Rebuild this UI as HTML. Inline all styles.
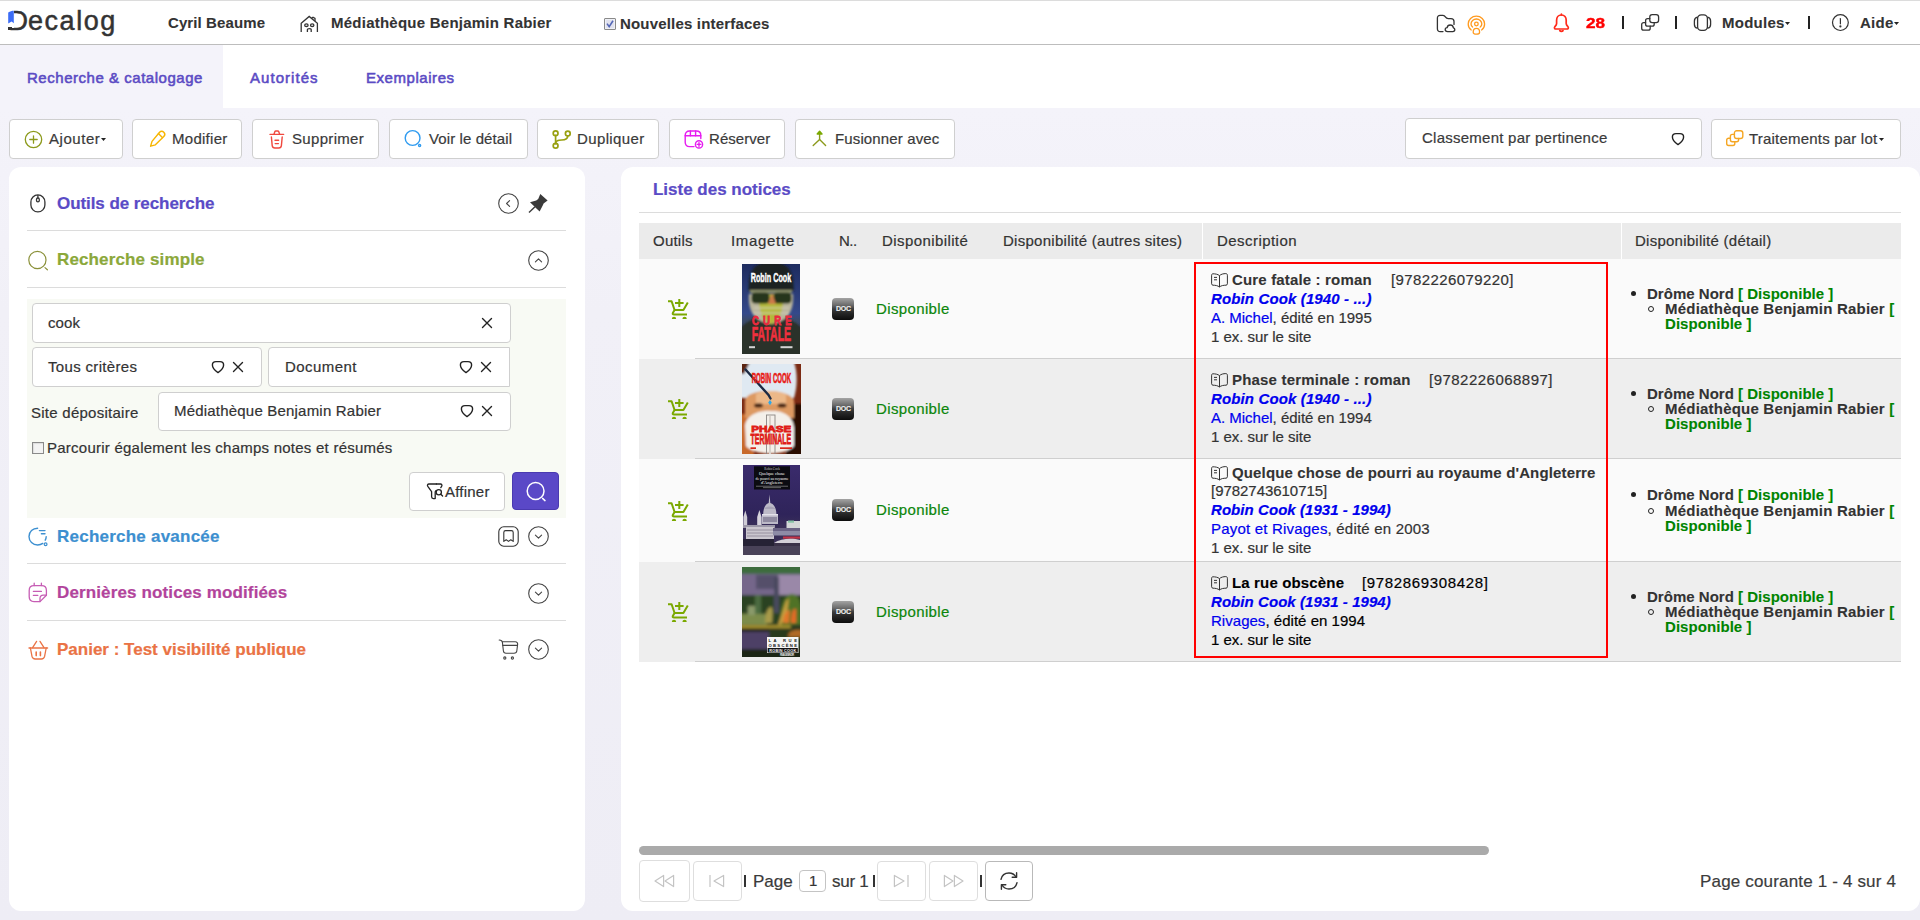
<!DOCTYPE html>
<html lang="fr">
<head>
<meta charset="utf-8">
<title>Decalog - Recherche &amp; catalogage</title>
<style>
*{box-sizing:border-box;margin:0;padding:0}
html,body{width:1920px;height:920px;overflow:hidden}
body{background:#f4f3fa;font-family:"Liberation Sans",sans-serif;font-size:15px;color:#333;position:relative}
.abs{position:absolute}
.t{position:absolute;white-space:nowrap;line-height:20px;-webkit-text-stroke:0.2px}
.b{font-weight:bold;-webkit-text-stroke:0.1px}
svg{display:block;overflow:visible}
/* top bar */
#top{position:absolute;left:0;top:0;width:1920px;height:45px;background:#fff;border-top:1px solid #dcdcdc;border-bottom:1px solid #bdbdbd}
#tabs{position:absolute;left:0;top:45px;width:1920px;height:63.5px;background:#fff}
#tabact{position:absolute;left:0;top:0;width:223px;height:64px;background:#f4f3fa}
.tab{color:#5b4bc4;font-size:15px;top:23px;-webkit-text-stroke:0.55px #5b4bc4}
/* toolbar */
.btn{position:absolute;top:119px;height:40px;background:#fff;border:1px solid #cfcfcf;border-radius:4px}
.btn .t{top:9px;font-size:15px;color:#3a3a3a}
.btn svg{position:absolute}
/* panels */
#left{position:absolute;left:9px;top:167px;width:576px;height:744px;background:#fff;border-radius:12px}
#right{position:absolute;left:621px;top:167px;width:1299px;height:744px;background:#fff;border-radius:12px}
.hr{position:absolute;height:1px;background:#dcdcdc}
.h{font-size:17px;font-weight:bold}
.inp{position:absolute;background:#fff;border:1px solid #cfcfcf;border-radius:4px}
/* table */
.th{position:absolute;top:223px;height:36px;background:#ebebeb}
.th .t{top:8px;color:#333}
.row{position:absolute;left:639px;width:1262px}
.rb{position:absolute;left:56px;right:0;bottom:0;height:1px;background:#cfcfcf}
.dispo{color:#0b860b}
.desc{position:absolute;left:571px;white-space:nowrap;line-height:19px;color:#222}
.desc a,.lnk{color:#0000ee}
.au{font-weight:bold;font-style:italic;color:#0000ee}
.det{position:absolute;left:1008px;font-weight:bold;line-height:15px;color:#222;white-space:nowrap}
.g{color:#008400}
/*FIT*/
#t_user{left:167.8px;letter-spacing:0.10px}
#t_site{left:330.5px;letter-spacing:0.24px}
#t_nouv{left:619.0px;letter-spacing:0.18px}
#t_mod{left:1721.0px;letter-spacing:0.25px}
#t_aide{left:1860.0px;letter-spacing:0.28px}
#tab1{left:26.0px;letter-spacing:0.53px}
#tab2{left:250.0px;letter-spacing:1.04px}
#tab3{left:365.3px;letter-spacing:0.55px}
#b1{left:39.2px;letter-spacing:0.54px}
#b2{left:38.5px;letter-spacing:0.27px}
#b3{left:39.0px;letter-spacing:0.32px}
#b4{left:39.2px;letter-spacing:0.10px}
#b5{left:38.5px;letter-spacing:0.38px}
#b6{left:38.2px;letter-spacing:0.06px}
#b7{left:38.0px;letter-spacing:0.13px}
#b8{left:16.0px;letter-spacing:0.25px}
#b9{left:37.0px;letter-spacing:0.20px}
#h1{left:58.0px;letter-spacing:-0.07px}
#h2{left:56.8px;letter-spacing:0.13px}
#h3{left:56.8px;letter-spacing:0.23px}
#h4{left:56.8px;letter-spacing:0.13px}
#h5{left:56.8px;letter-spacing:-0.00px}
#f1{left:47.8px;letter-spacing:0.10px}
#f2{left:47.8px;letter-spacing:0.33px}
#f3{left:283.7px;letter-spacing:0.44px}
#f4{left:31.5px;letter-spacing:0.26px}
#f5{left:173.0px;letter-spacing:0.20px}
#f6{left:46.5px;letter-spacing:0.24px}
#f7{left:445.3px;letter-spacing:0.22px}
#h6{left:651.7px;letter-spacing:-0.01px}
#c1{left:652.7px;letter-spacing:0.23px}
#c2{left:730.0px;letter-spacing:0.67px}
#c3{left:838.0px;letter-spacing:-0.50px}
#c4{left:881.3px;letter-spacing:0.41px}
#c5{left:1001.7px;letter-spacing:0.27px}
#c6{left:1215.6px;letter-spacing:0.45px}
#c7{left:1634.5px;letter-spacing:0.25px}
#d0{left:874.7px;letter-spacing:0.37px}
#d1{left:874.7px;letter-spacing:0.37px}
#d2{left:874.7px;letter-spacing:0.37px}
#d3{left:874.7px;letter-spacing:0.37px}
#r1a{left:1232.0px;letter-spacing:0.16px}
#r1i{left:1389.8px;letter-spacing:0.41px}
#r1b{left:1210.1px;letter-spacing:0.13px}
#r1c{left:1210.1px;letter-spacing:-0.01px}
#r1d{left:1209.1px;letter-spacing:-0.04px}
#r2a{left:1231.0px;letter-spacing:0.19px}
#r2i{left:1427.6px;letter-spacing:0.48px}
#r2b{left:1210.1px;letter-spacing:0.13px}
#r2c{left:1210.1px;letter-spacing:-0.01px}
#r2d{left:1209.1px;letter-spacing:-0.04px}
#r3a{left:1232.0px;letter-spacing:0.14px}
#r3i{left:1209.1px;letter-spacing:-0.04px}
#r3b{left:1210.1px;letter-spacing:0.06px}
#r3c{left:1209.1px;letter-spacing:0.20px}
#r3d{left:1209.1px;letter-spacing:-0.04px}
#r4a{left:1231.0px;letter-spacing:0.15px}
#r4i{left:1360.9px;letter-spacing:0.66px}
#r4b{left:1210.1px;letter-spacing:0.06px}
#r4c{left:1209.1px;letter-spacing:0.03px}
#r4d{left:1209.1px;letter-spacing:-0.04px}
#p1{left:751.7px;letter-spacing:0.02px}
#p2{left:832.0px;letter-spacing:-0.26px}
#p3{left:1699.6px;letter-spacing:0.17px}
#e0a{left:1646.0px;letter-spacing:0.02px}
#e0b{left:1663.8px;letter-spacing:0.21px}
#e0c{left:1663.8px;letter-spacing:0.06px}
#e1a{left:1646.0px;letter-spacing:0.02px}
#e1b{left:1663.8px;letter-spacing:0.21px}
#e1c{left:1663.8px;letter-spacing:0.06px}
#e2a{left:1646.0px;letter-spacing:0.02px}
#e2b{left:1663.8px;letter-spacing:0.21px}
#e2c{left:1663.8px;letter-spacing:0.06px}
#e3a{left:1646.0px;letter-spacing:0.02px}
#e3b{left:1663.8px;letter-spacing:0.21px}
#e3c{left:1663.8px;letter-spacing:0.06px}
/*ENDFIT*/
</style>
</head>
<body>
<div id="top">
<span class="t" id="logo" style="left:8.600px;top:4px;font-size:27px;line-height:32px;color:#333;letter-spacing:1.55px;-webkit-text-stroke:0.5px #333"><span style="margin-right:-1.700px">D</span>ecalog</span>
<span class="abs" style="left:7px;top:12.500px;width:7.200px;height:14px;background:#fff"></span>
<span class="abs" style="left:7px;top:9px;width:6.500px;height:4px;background:#fff"></span>
<span class="abs" style="left:8px;top:26.300px;width:4px;height:2.900px;background:#333"></span>
<svg class="abs" style="left:8px;top:9px" width="20" height="22" viewBox="0 0 20 22"><path d="M0.2 2.6 C2 1.200 4 0.800 5.800 0.800 L5.800 13.200 L3.600 11.400 L0.200 13.600 Z" fill="#3b6cf6"/></svg>
<span class="t b" id="t_user" style="left:168px;top:12px">Cyril Beaume</span>
<svg class="abs" style="left:300px;top:14px" width="19" height="19" viewBox="0 0 19 19" fill="none" stroke="#333" stroke-width="1.3"><path d="M1.2 17 V8.2 L9.2 1.4 L17.4 8.2 V17"/><path d="M11.5 3.2 L13 2.2 L15 3.4 V6"/><ellipse cx="6.4" cy="10.2" rx="1.7" ry="1.3"/><ellipse cx="12.2" cy="10.2" rx="1.7" ry="1.3"/><path d="M7.4 17 V14.6 C7.4 13.4 11.2 13.4 11.2 14.6 V17"/></svg>
<span class="t b" id="t_site" style="left:331px;top:12px">Médiathèque Benjamin Rabier</span>
<span class="abs" style="left:604px;top:17px;width:12px;height:12px;border:1px solid #8a8a8a;background:#e1e2ee;border-radius:1px;box-shadow:inset 0 0 0 1px #eef0f6"></span>
<svg class="abs" style="left:606px;top:19px" width="8" height="8" viewBox="0 0 8 8"><path d="M1 3.6 L3.2 6.6 L7 0.8" fill="none" stroke="#5467b6" stroke-width="1.6"/></svg>
<span class="t b" id="t_nouv" style="left:620px;top:13px">Nouvelles interfaces</span>
<!-- right icons -->
<svg class="abs" style="left:1436px;top:13px" width="20" height="20" viewBox="0 0 20 20" fill="none" stroke="#333" stroke-width="1.3" stroke-linecap="round" stroke-linejoin="round"><path d="M7 17.6 H4.2 C2.4 17.6 1.4 16.6 1.4 14.8 V4 C1.4 2.4 2.4 1.4 4 1.4 H7 C8.4 1.4 8.8 2 9.6 3.2 C10.2 4.2 10.8 4.6 12.2 4.6 H15 C17 4.6 18 5.8 18 7.6 V10.4"/><path d="M11.6 17.6 C10 17.6 9.2 16.6 9.2 15.6 C9.2 14.4 10 13.6 11.2 13.6 C11.4 12 12.6 11 14.2 11 C16 11 17.2 12.2 17.4 13.8 C18.4 14 18.8 14.8 18.8 15.6 C18.8 16.8 18 17.6 16.8 17.6 Z"/></svg>
<svg class="abs" style="left:1467px;top:14px" width="19" height="20" viewBox="0 0 19 20" fill="none" stroke="#ff9a1f" stroke-width="1.3" stroke-linecap="round"><path d="M4.200 15 C2.200 13.600 1.200 11.400 1.200 9 C1.200 4.600 4.800 1.200 9.400 1.200 C14 1.200 17.600 4.600 17.600 9 C17.600 11.400 16.600 13.600 14.600 15"/><path d="M5.6 12 C4.6 11.2 4 10.2 4 9 C4 6.2 6.4 4 9.4 4 C12.4 4 14.8 6.2 14.8 9 C14.8 10.2 14.2 11.2 13.2 12"/><circle cx="9.4" cy="9" r="1.8"/><path d="M9.400 13.400 C11.200 13.400 12.600 15 12.600 17.200 C12.600 18.600 11.400 19.200 9.400 19.200 C7.400 19.200 6.200 18.600 6.200 17.200 C6.200 15 7.600 13.400 9.400 13.400 Z"/></svg>
<svg class="abs" style="left:1553px;top:12px" width="17" height="20" viewBox="0 0 17 20" fill="none" stroke="#ff2a1a" stroke-width="1.7" stroke-linecap="round" stroke-linejoin="round"><path d="M8.4 2 C5.2 2 3.6 4.4 3.6 7.2 V10.4 C3.6 11.8 2.6 12.8 1.8 13.8 C1 14.8 1.6 16 3 16 H13.8 C15.2 16 15.8 14.8 15 13.8 C14.2 12.8 13.2 11.8 13.2 10.4 V7.2 C13.2 4.4 11.6 2 8.4 2 Z"/><path d="M8.4 1.2 V2"/><path d="M6.8 17.6 C7.6 18.6 9.2 18.6 10 17.6" stroke-width="1.8"/></svg>
<span class="t b" id="n28" style="left:1586px;top:12px;color:#ff0000;font-size:14px;transform:scaleX(1.22);transform-origin:0 0;-webkit-text-stroke:0.4px #ff0000">28</span>
<span class="abs" style="left:1622px;top:15px;width:2px;height:13px;background:#222"></span>
<svg class="abs" style="left:1641px;top:13px" width="19" height="18" viewBox="0 0 19 18" fill="none" stroke="#333" stroke-width="1.3" stroke-linejoin="round" stroke-linecap="round"><rect x="8.800" y="0.700" width="8.800" height="8" rx="2.400"/><path d="M8.800 4.600 H6.600 C5.400 4.600 4.600 5.400 4.600 6.600 V10.200 C4.600 11.400 5.400 12.200 6.600 12.200 H11.200 C12.400 12.200 13.200 11.400 13.200 10.200 V8.700"/><path d="M4.600 8.600 H2.700 C1.500 8.600 0.700 9.400 0.700 10.600 V14.200 C0.700 15.400 1.500 16.200 2.700 16.200 H7.200 C8.400 16.200 9.200 15.400 9.200 14.200 V12.200"/></svg>
<span class="abs" style="left:1675px;top:15px;width:2px;height:13px;background:#222"></span>
<svg class="abs" style="left:1693px;top:13px" width="19" height="19" viewBox="0 0 19 19" fill="none" stroke="#333" stroke-width="1.3"><rect x="4.600" y="0.800" width="9.800" height="15.600" rx="3.600"/><path d="M4.600 3.200 C2.600 3.600 1.400 5 1.400 7 V10.400 C1.400 12.400 2.600 13.800 4.600 14.200"/><path d="M14.400 3.200 C16.400 3.600 17.600 5 17.600 7 V10.400 C17.600 12.400 16.400 13.800 14.400 14.200"/></svg>
<span class="t b" id="t_mod" style="left:1722px;top:12px">Modules</span>
<svg class="abs" style="left:1785px;top:20.500px" width="5" height="3" viewBox="0 0 5 3"><path d="M0 0 H5 L2.5 3 Z" fill="#222"/></svg>
<span class="abs" style="left:1808px;top:15px;width:2px;height:13px;background:#222"></span>
<svg class="abs" style="left:1831px;top:13px" width="19" height="19" viewBox="0 0 19 19" fill="none" stroke="#333" stroke-width="1.2"><circle cx="9.400" cy="8.600" r="7.900"/><path d="M9.400 4.600 V9.800" stroke-linecap="round"/><circle cx="9.400" cy="12.400" r="0.500" fill="#333"/></svg>
<span class="t b" id="t_aide" style="left:1860px;top:12px">Aide</span>
<svg class="abs" style="left:1893.500px;top:20.500px" width="5" height="3" viewBox="0 0 5 3"><path d="M0 0 H5 L2.5 3 Z" fill="#222"/></svg>
</div>
<div id="tabs"><div id="tabact"></div>
<span class="t tab" id="tab1" style="left:27px">Recherche &amp; catalogage</span>
<span class="t tab" id="tab2" style="left:250px">Autorités</span>
<span class="t tab" id="tab3" style="left:366px">Exemplaires</span>
</div>
<div class="abs" style="left:0;top:108px;width:1920px;height:812px;background:linear-gradient(#f4f3fa,#f1f0f7 25%,#eeedf5)"></div>
<!-- toolbar -->
<div class="btn" style="left:9px;width:114px"><svg style="left:14px;top:9.5px" width="19" height="19" viewBox="0 0 19 19" fill="none" stroke="#8c9a1c" stroke-width="1.3" stroke-linecap="round"><circle cx="9.5" cy="9.5" r="8.2"/><path d="M9.5 5.8 V13.2 M5.8 9.5 H13.2"/></svg><span class="t" id="b1" style="left:39px">Ajouter</span><svg style="left:91px;top:18px" width="5" height="4" viewBox="0 0 5 4"><path d="M0 0 H5 L2.5 3 Z" fill="#222"/></svg></div>
<div class="btn" style="left:132px;width:110px"><svg style="left:16px;top:10px" width="17" height="18" viewBox="0 0 17 18" fill="none" stroke="#f7b500" stroke-width="1.4" stroke-linejoin="round" stroke-linecap="round"><path d="M10.6 2.2 C11.8 1 13.6 1 14.8 2.2 C16 3.4 16 5.2 14.8 6.4 L6.4 14.8 L1.6 16.2 L3 11.4 Z"/><path d="M9.4 3.6 L13.4 7.6"/></svg><span class="t" id="b2" style="left:39px">Modifier</span></div>
<div class="btn" style="left:252px;width:127px"><svg style="left:16px;top:10px" width="17" height="19" viewBox="0 0 17 19" fill="none" stroke="#f0483e" stroke-width="1.4" stroke-linecap="round" stroke-linejoin="round"><path d="M1 4.4 H14.6"/><path d="M5 4.2 L5.8 1.8 C6 1.2 6.4 1 7 1 H8.6 C9.2 1 9.6 1.2 9.8 1.8 L10.6 4.2"/><path d="M2.4 7 L3.2 15.6 C3.4 17.2 4.2 18 5.8 18 H9.8 C11.4 18 12.2 17.2 12.4 15.6 L13.2 7"/><path d="M6 10.2 H9.6 M6.2 13.6 H9.4"/></svg><span class="t" id="b3" style="left:39px">Supprimer</span></div>
<div class="btn" style="left:389px;width:139px"><svg style="left:14px;top:9px" width="20" height="20" viewBox="0 0 20 20" fill="none" stroke="#2f9bf0" stroke-width="1.4"><circle cx="8.6" cy="9" r="7.4"/><circle cx="15.6" cy="16.4" r="1.1" stroke-width="1.3"/></svg><span class="t" id="b4" style="left:39px">Voir le détail</span></div>
<div class="btn" style="left:537px;width:122px"><svg style="left:14px;top:9.5px" width="20" height="19" viewBox="0 0 20 19" fill="none" stroke="#98a010" stroke-width="1.7" stroke-linecap="round"><circle cx="3.6" cy="3.2" r="2.4"/><circle cx="3.6" cy="15.8" r="2.4"/><circle cx="15.8" cy="3.6" r="2.4"/><path d="M3.6 5.4 V13.6"/><path d="M15.8 5.8 C15.8 9.4 13.4 10 9.6 10 C6 10 3.6 10.8 3.6 13.4"/></svg><span class="t" id="b5" style="left:39px">Dupliquer</span></div>
<div class="btn" style="left:669px;width:116px"><svg style="left:14px;top:9px" width="20" height="20" viewBox="0 0 20 20" fill="none" stroke="#e61cf0" stroke-width="1.4" stroke-linecap="round"><path d="M10 17.6 H5.6 C2.8 17.6 1.2 16 1.2 13.2 V6.4 C1.2 3.6 2.8 2 5.6 2 H12.4 C15.2 2 16.8 3.6 16.8 6.4 V9.6"/><path d="M1.2 6.8 H16.8"/><path d="M6.4 2 V6.8 M11.6 2 V6.8"/><circle cx="15" cy="15.4" r="3.6"/><path d="M15 13.6 V17.2 M13.2 15.4 H16.8"/></svg><span class="t" id="b6" style="left:39px">Réserver</span></div>
<div class="btn" style="left:795px;width:160px"><svg style="left:16px;top:10px" width="16" height="18" viewBox="0 0 16 18" fill="none" stroke="#8c9a1c" stroke-width="1.4" stroke-linecap="round" stroke-linejoin="round"><path d="M7.6 2.2 V9.4"/><path d="M1.2 15.4 L7.6 9.4 L13.6 15.4"/><path d="M5.200 4 L7.600 1.200 L10 4 Z" fill="#7aa800" stroke="#7aa800"/></svg><span class="t" id="b7" style="left:39px">Fusionner avec</span></div>
<div class="btn" style="left:1405px;top:118px;width:297px;height:41px"><span class="t" id="b8" style="left:16px;top:9px">Classement par pertinence</span><svg style="left:265px;top:13px" width="14" height="14" viewBox="0 0 14 14" fill="none" stroke="#222" stroke-width="1.4" stroke-linejoin="round"><path d="M7 12.6 C4 10.6 1.4 8.4 1.4 5 C1.4 2.6 3 1.6 5 1.6 H9 C11 1.6 12.6 2.6 12.6 5 C12.6 8.4 10 10.6 7 12.6 Z"/></svg></div>
<div class="btn" style="left:1711px;width:190px"><svg style="left:14px;top:10px" width="19" height="18" viewBox="0 0 19 18" fill="none" stroke="#f5a623" stroke-width="1.400" stroke-linejoin="round" stroke-linecap="round"><rect x="8.400" y="0.700" width="8.400" height="7.800" rx="2.300"/><path d="M8.400 4.400 H6.300 C5.200 4.400 4.400 5.200 4.400 6.300 V9.800 C4.400 10.900 5.200 11.700 6.300 11.700 H10.700 C11.800 11.700 12.600 10.900 12.600 9.800 V8.500"/><path d="M4.400 8.200 H2.600 C1.500 8.200 0.700 9 0.700 10.100 V13.600 C0.700 14.700 1.500 15.500 2.600 15.500 H6.900 C8 15.500 8.800 14.700 8.800 13.600 V11.700"/></svg><span class="t" id="b9" style="left:37px">Traitements par lot</span><svg style="left:167px;top:18px" width="5" height="4" viewBox="0 0 5 4"><path d="M0 0 H5 L2.5 3 Z" fill="#222"/></svg></div>
<div id="left"></div>
<div id="right"></div>
<!-- right panel content -->
<span class="t h" id="h6" style="left:653px;top:180px;color:#5a4bc6">Liste des notices</span>
<div class="hr" style="left:639px;top:212px;width:1262px"></div>
<div class="th" style="left:639px;width:563px"></div><div class="th" style="left:1203px;width:418px"></div><div class="th" style="left:1622px;width:279px"></div>
<span class="t" id="c1" style="left:653px;top:231px;color:#333">Outils</span>
<span class="t" id="c2" style="left:731px;top:231px;color:#333">Imagette</span>
<span class="t" id="c3" style="left:839px;top:231px;color:#333">N..</span>
<span class="t" id="c4" style="left:882px;top:231px;color:#333">Disponibilité</span>
<span class="t" id="c5" style="left:1003px;top:231px;color:#333">Disponibilité (autres sites)</span>
<span class="t" id="c6" style="left:1217px;top:231px;color:#333">Description</span>
<span class="t" id="c7" style="left:1635px;top:231px;color:#333">Disponibilité (détail)</span>
<div class="row" style="top:259px;height:100px;background:#fafafa"><div class="rb"></div></div>
<div class="row" style="top:359px;height:100px;background:#eeeeee"><div class="rb"></div></div>
<div class="row" style="top:459px;height:103px;background:#fafafa"><div class="rb"></div></div>
<div class="row" style="top:562px;height:100px;background:#eeeeee"><div class="rb"></div></div>
<svg class="abs" style="left:667px;top:298px" width="22" height="22" viewBox="0 0 22 22" fill="none" stroke="#7aa800" stroke-width="2" stroke-linejoin="round"><path d="M1 3.200 H4.600 L7.600 12 H16.400 L20.800 4.600"/><path d="M7.600 12 L5.800 15 C5.400 16 6 16.600 7 16.600 H20"/><path d="M12.300 1 V9 M8 5 H16.600"/><path d="M4.800 21 A2.200 2.200 0 0 1 9.200 21 Z M15.400 21 A2.200 2.200 0 0 1 19.800 21 Z" fill="#7aa800" stroke="none"/></svg>
<div class="abs" style="left:832px;top:298px;width:22px;height:22px;border-radius:4px;background:linear-gradient(#a4a4a4,#6c6c6c 32%,#3c3c3c 50%,#262626 70%,#0c0c0c)"><span class="t b" style="left:4px;top:7px;font-size:7px;line-height:8px;color:#f0f0f0;letter-spacing:-0.3px">DOC</span></div>
<svg class="abs" style="left:667px;top:398px" width="22" height="22" viewBox="0 0 22 22" fill="none" stroke="#7aa800" stroke-width="2" stroke-linejoin="round"><path d="M1 3.200 H4.600 L7.600 12 H16.400 L20.800 4.600"/><path d="M7.600 12 L5.800 15 C5.400 16 6 16.600 7 16.600 H20"/><path d="M12.300 1 V9 M8 5 H16.600"/><path d="M4.800 21 A2.200 2.200 0 0 1 9.200 21 Z M15.400 21 A2.200 2.200 0 0 1 19.800 21 Z" fill="#7aa800" stroke="none"/></svg>
<div class="abs" style="left:832px;top:398px;width:22px;height:22px;border-radius:4px;background:linear-gradient(#a4a4a4,#6c6c6c 32%,#3c3c3c 50%,#262626 70%,#0c0c0c)"><span class="t b" style="left:4px;top:7px;font-size:7px;line-height:8px;color:#f0f0f0;letter-spacing:-0.3px">DOC</span></div>
<svg class="abs" style="left:667px;top:500px" width="22" height="22" viewBox="0 0 22 22" fill="none" stroke="#7aa800" stroke-width="2" stroke-linejoin="round"><path d="M1 3.200 H4.600 L7.600 12 H16.400 L20.800 4.600"/><path d="M7.600 12 L5.800 15 C5.400 16 6 16.600 7 16.600 H20"/><path d="M12.300 1 V9 M8 5 H16.600"/><path d="M4.800 21 A2.200 2.200 0 0 1 9.200 21 Z M15.400 21 A2.200 2.200 0 0 1 19.800 21 Z" fill="#7aa800" stroke="none"/></svg>
<div class="abs" style="left:832px;top:499px;width:22px;height:22px;border-radius:4px;background:linear-gradient(#a4a4a4,#6c6c6c 32%,#3c3c3c 50%,#262626 70%,#0c0c0c)"><span class="t b" style="left:4px;top:7px;font-size:7px;line-height:8px;color:#f0f0f0;letter-spacing:-0.3px">DOC</span></div>
<svg class="abs" style="left:667px;top:601px" width="22" height="22" viewBox="0 0 22 22" fill="none" stroke="#7aa800" stroke-width="2" stroke-linejoin="round"><path d="M1 3.200 H4.600 L7.600 12 H16.400 L20.800 4.600"/><path d="M7.600 12 L5.800 15 C5.400 16 6 16.600 7 16.600 H20"/><path d="M12.300 1 V9 M8 5 H16.600"/><path d="M4.800 21 A2.200 2.200 0 0 1 9.200 21 Z M15.400 21 A2.200 2.200 0 0 1 19.800 21 Z" fill="#7aa800" stroke="none"/></svg>
<div class="abs" style="left:832px;top:601px;width:22px;height:22px;border-radius:4px;background:linear-gradient(#a4a4a4,#6c6c6c 32%,#3c3c3c 50%,#262626 70%,#0c0c0c)"><span class="t b" style="left:4px;top:7px;font-size:7px;line-height:8px;color:#f0f0f0;letter-spacing:-0.3px">DOC</span></div>
<span class="t dispo" id="d0" style="left:876px;top:299px">Disponible</span>
<span class="t dispo" id="d1" style="left:876px;top:399px">Disponible</span>
<span class="t dispo" id="d2" style="left:876px;top:500px">Disponible</span>
<span class="t dispo" id="d3" style="left:876px;top:602px">Disponible</span>
<svg class="abs" style="left:742px;top:264px;overflow:hidden" width="58" height="90" viewBox="0 0 58 90"><defs><filter id="bl1" x="-10%" y="-10%" width="120%" height="120%"><feGaussianBlur stdDeviation="0.9"/></filter><linearGradient id="gc1" x1="0" y1="0" x2="0" y2="1"><stop offset="0" stop-color="#1d2b5e"/><stop offset="0.55" stop-color="#34498a"/><stop offset="0.62" stop-color="#3a4a6a"/></linearGradient></defs><rect width="58" height="90" fill="url(#gc1)"/><g filter="url(#bl1)"><path d="M-2 92 V64 C6 56 14 54 20 52 H38 C44 54 52 56 60 64 V92 Z" fill="#2b302c"/><path d="M7 30 C6 44 10 58 29 60 C48 58 52 44 51 30 Z" fill="#b9b59c"/><path d="M17 30 C16 44 20 58 29 60 C38 58 42 44 41 30 Z" fill="#b4b83a"/><path d="M6.600 27 C6 4 14 -2 29 -2 C44 -2 52 4 51.600 27 Z" fill="#1a2124"/><rect x="8" y="26" width="42" height="3" fill="#8a8f6a"/><rect x="9.500" y="28.500" width="18" height="11" rx="4" fill="#26361a"/><rect x="31.500" y="28.500" width="18" height="11" rx="4" fill="#26361a"/><path d="M26 40 L30 29 L34 40 Z" fill="#cc7a48"/><path d="M12 44 H47 M11 49 H47" stroke="#d8d6c4" stroke-width="1.200" fill="none"/></g><text x="29" y="17.600" font-family="Liberation Sans, sans-serif" font-weight="bold" font-size="13.500" fill="#ffffff" stroke="#ffffff" stroke-width="0.5" text-anchor="middle" textLength="40.500" lengthAdjust="spacingAndGlyphs">Robin Cook</text><text transform="translate(10,61) scale(0.8,1)" font-family="Liberation Sans, sans-serif" font-weight="bold" font-size="12" fill="#ea2a3e" stroke="#ea2a3e" stroke-width="0.8" letter-spacing="5.2">CURE</text><text x="29.400" y="77.400" font-family="Liberation Sans, sans-serif" font-weight="bold" font-size="20" fill="#f0303e" stroke="#f0303e" stroke-width="0.7" text-anchor="middle" textLength="39.500" lengthAdjust="spacingAndGlyphs">FATALE</text><rect x="7" y="82.200" width="6" height="2" fill="#d4d4d4"/><rect x="38.500" y="82.200" width="12" height="2" fill="#d4d4d4"/></svg>
<svg class="abs" style="left:742px;top:364px;overflow:hidden" width="59" height="90" viewBox="0 0 59 90"><defs><filter id="bl2" x="-10%" y="-10%" width="120%" height="120%"><feGaussianBlur stdDeviation="1.300"/></filter></defs><rect width="59" height="90" fill="#7a2a12"/><g filter="url(#bl2)"><rect x="44" y="40" width="18" height="54" fill="#2a0c06"/><rect x="-2" y="50" width="14" height="44" fill="#c8692a"/><path d="M-2 -2 H52 C56 10 55 24 52 34 H-2 Z" fill="#dfe9f2"/><path d="M-2 -2 H8 L2 10 H-2 Z" fill="#5a2410"/><path d="M3 36 C6 24 46 24 52 36 V54 H3 Z" fill="#dd9a62"/><path d="M14 30 C22 26 34 26 44 30 V40 H14 Z" fill="#ecb888"/><ellipse cx="16.500" cy="41.500" rx="4.500" ry="2.200" fill="#4a2812"/><ellipse cx="40" cy="41.500" rx="4.500" ry="2.200" fill="#4a2812"/><path d="M3 62 C4 50 20 46 29 47 C40 46 52 52 52 64 V82 C44 92 12 92 4 82 Z" fill="#f4f0ea"/></g><path d="M3.500 5.500 L26.500 31 L28.500 34.500" stroke="#1c2a44" stroke-width="2.400" fill="none" stroke-linecap="round"/><path d="M28 36 L29.800 38.600 L28 41.200 L26.200 38.600 Z" fill="#2aa8ea"/><rect x="24.500" y="51" width="8.500" height="40" fill="none" stroke="#8c8684" stroke-width="0.900"/><rect x="27" y="52" width="2" height="38" fill="#d8d2cc"/><text x="29.400" y="18.500" font-family="Liberation Sans, sans-serif" font-weight="bold" font-size="14" fill="#e82018" stroke="#e82018" stroke-width="0.7" text-anchor="middle" textLength="39.500" lengthAdjust="spacingAndGlyphs">ROBIN COOK</text><text x="29.200" y="68.400" font-family="Liberation Sans, sans-serif" font-weight="bold" font-size="9" fill="#e01c18" stroke="#e01c18" stroke-width="0.8" text-anchor="middle" textLength="40" lengthAdjust="spacingAndGlyphs">PHASE</text><text x="28.800" y="79.500" font-family="Liberation Sans, sans-serif" font-weight="bold" font-size="14" fill="#e01c18" stroke="#e01c18" stroke-width="0.8" text-anchor="middle" textLength="40.500" lengthAdjust="spacingAndGlyphs">TERMINALE</text><rect x="8.500" y="83.300" width="5.500" height="1.700" fill="#d8281c"/><rect x="38" y="83.300" width="12" height="1.700" fill="#d8281c"/></svg>
<svg class="abs" style="left:743px;top:465px;overflow:hidden" width="57" height="90" viewBox="0 0 57 90"><defs><filter id="bl3" x="-10%" y="-10%" width="120%" height="120%"><feGaussianBlur stdDeviation="0.500"/></filter><linearGradient id="gc3" x1="0" y1="0" x2="0" y2="1"><stop offset="0" stop-color="#3a2b6c"/><stop offset="0.55" stop-color="#2f245a"/><stop offset="0.7" stop-color="#3a3058"/></linearGradient></defs><rect width="57" height="90" fill="url(#gc3)"/><g filter="url(#bl3)"><path d="M26.500 29.500 L27.300 38 C31 39 33.200 43 33.400 49 H35 V59 H19 V49 H20.200 C20.400 43 22.500 39 25.700 38 Z" fill="#bdbac8"/><path d="M21 44 C22 40.500 31 40.500 32.600 44 Z" fill="#a8a4b6"/><rect x="19" y="49" width="16" height="1.400" fill="#e4e2ea"/><rect x="20" y="52" width="14" height="5" fill="#8f8aa0"/><path d="M2.300 45.500 L4.200 52 V63 H0.400 V52 Z" fill="#cfccd6"/><path d="M16.400 45 L18.600 52 V63 H14.200 V52 Z" fill="#d6d3dc"/><rect x="0" y="60" width="32" height="3" fill="#9c98a8"/><rect x="3" y="62" width="28" height="12" fill="#cac6ce"/><path d="M4 65 H30 M4 68 H30 M4 71 H30" stroke="#8a8494" stroke-width="0.800"/><rect x="43.500" y="56" width="14" height="7" fill="#d4d8d8"/><rect x="45" y="55.500" width="6" height="2.200" fill="#86c4a6"/><rect x="30" y="63" width="27" height="3" fill="#6a6484"/><rect x="30" y="66" width="27" height="4.500" fill="#8e8ca6"/><rect x="40" y="71.500" width="17" height="2.200" fill="#c23446"/><path d="M31 78 C38 73 50 73 57 75 V78 Z" fill="#d4d0d8"/><rect x="0" y="74" width="31" height="7" fill="#282236"/><rect x="31" y="78" width="26" height="3" fill="#3a3248"/><rect x="0" y="81" width="57" height="9" fill="#4a4259"/></g><rect x="11" y="1.300" width="36" height="23.200" fill="#0b0b11"/><text x="29" y="5.200" font-family="Liberation Serif, serif" font-size="3.200" fill="#c8c8c8" text-anchor="middle">Robin Cook</text><text x="29" y="10.200" font-family="Liberation Serif, serif" font-size="4.400" fill="#ffffff" text-anchor="middle">Quelque chose</text><text x="29" y="14.600" font-family="Liberation Serif, serif" font-size="4.400" fill="#ffffff" text-anchor="middle" textLength="33" lengthAdjust="spacingAndGlyphs">de pourri au royaume</text><text x="29" y="19" font-family="Liberation Serif, serif" font-size="4.400" fill="#ffffff" text-anchor="middle">d'Angleterre</text><rect x="13" y="20.800" width="32" height="0.700" fill="#8c8c8c"/><rect x="20" y="22.400" width="18" height="0.700" fill="#8c8c8c"/></svg>
<svg class="abs" style="left:742px;top:567px;overflow:hidden" width="58" height="90" viewBox="0 0 58 90"><defs><filter id="bl4" x="-10%" y="-10%" width="120%" height="120%"><feGaussianBlur stdDeviation="1.600"/></filter></defs><rect width="58" height="90" fill="#2c3a20"/><g filter="url(#bl4)"><rect x="-3" y="-3" width="64" height="10" fill="#3c6c3e"/><rect x="-3" y="7" width="64" height="26" fill="#75668a"/><rect x="36" y="8" width="26" height="20" fill="#9a88a8"/><rect x="14" y="8" width="22" height="14" fill="#55506a"/><rect x="-3" y="28" width="64" height="30" fill="#2b4221"/><rect x="13" y="28" width="6" height="24" fill="#4c6c40"/><rect x="32" y="10" width="5" height="36" fill="#4a4a5e"/><path d="M38 58 C38 40 42 27 50 27 C57 27 60 36 60 58 Z" fill="#4f7226"/><path d="M44 34 L47 31 L45 46 L39 58 H36 Z" fill="#c8a040"/><path d="M41 56 C41 48 44 43 48 43 L47 56 Z" fill="#e2782a"/><path d="M49 56 C49 46 51 41 54 42 L54 56 Z" fill="#e86a28"/><rect x="-3" y="47" width="28" height="11" fill="#7c8c4c"/><rect x="6" y="39" width="7" height="9" fill="#8a9a6a"/><path d="M23 56 C23 46 26 40 29 40 C31 40 31 46 30 56 Z" fill="#a89a4a"/><rect x="-3" y="58.600" width="52" height="2.200" fill="#c8a830"/><rect x="-3" y="61.500" width="64" height="5" fill="#26281a"/><rect x="-3" y="65" width="30" height="17" fill="#4e3f66"/><rect x="27" y="62" width="34" height="10" fill="#2a3a1c"/><path d="M46 70 C46 64 52 62 60 63 V70 Z" fill="#b06a28"/><rect x="-3" y="82" width="64" height="11" fill="#1e2616"/></g><rect x="25" y="70" width="31.500" height="16" fill="#f5f5f3"/><text x="40.700" y="74.600" font-family="Liberation Sans, sans-serif" font-weight="bold" font-size="4.200" fill="#161616" text-anchor="middle" textLength="28.500" lengthAdjust="spacing">LA RUE</text><text x="40.700" y="79.800" font-family="Liberation Sans, sans-serif" font-weight="bold" font-size="4.200" fill="#161616" text-anchor="middle" textLength="28.500" lengthAdjust="spacing">OBSCÈNE</text><rect x="25.600" y="81" width="30.200" height="4.500" fill="#121212"/><text x="40.700" y="84.600" font-family="Liberation Sans, sans-serif" font-weight="bold" font-size="3.800" fill="#f4f4f4" text-anchor="middle" textLength="27" lengthAdjust="spacing">ROBIN COOK</text><text x="45" y="88.600" font-family="Liberation Sans, sans-serif" font-weight="bold" font-size="2.600" fill="#e8e8e8" text-anchor="middle" textLength="14" lengthAdjust="spacing">RIVAGES/NOIR</text></svg>
<svg class="abs" style="left:1211px;top:273px" width="17" height="15" viewBox="0 0 17 15" fill="none" stroke="#333" stroke-width="1" stroke-linejoin="round"><path d="M8.5 2.6 C6.8 1.2 4.2 0.8 2 0.8 C1.2 0.8 0.6 1.2 0.6 2.2 V10.8 C0.6 11.6 1.2 12.2 2 12.2 C4.2 12.2 6.8 12.6 8.5 14 Z"/><path d="M8.5 2.6 C10 1.2 12.4 0.6 14.8 0.6 C15.8 0.6 16.4 1.2 16.4 2.2 V10.8 C16.4 11.6 15.8 12.2 15 12.2 C12.6 12.2 10 12.6 8.5 14"/><path d="M3 4.4 H6 M3 6.8 H6"/></svg>
<span class="t b" id="r1a" style="left:1232px;top:270px">Cure fatale : roman</span>
<span class="t " id="r1i" style="left:1391px;top:270px">[9782226079220]</span>
<span class="t au" id="r1b" style="left:1211px;top:289px">Robin Cook (1940 - ...)</span>
<span class="t " id="r1c" style="left:1211px;top:308px"><span class="lnk">A. Michel</span>, édité en 1995</span>
<span class="t " id="r1d" style="left:1211px;top:327px">1 ex. sur le site</span>
<svg class="abs" style="left:1211px;top:373px" width="17" height="15" viewBox="0 0 17 15" fill="none" stroke="#333" stroke-width="1" stroke-linejoin="round"><path d="M8.5 2.6 C6.8 1.2 4.2 0.8 2 0.8 C1.2 0.8 0.6 1.2 0.6 2.2 V10.8 C0.6 11.6 1.2 12.2 2 12.2 C4.2 12.2 6.8 12.6 8.5 14 Z"/><path d="M8.5 2.6 C10 1.2 12.4 0.6 14.8 0.6 C15.8 0.6 16.4 1.2 16.4 2.2 V10.8 C16.4 11.6 15.8 12.2 15 12.2 C12.6 12.2 10 12.6 8.5 14"/><path d="M3 4.4 H6 M3 6.8 H6"/></svg>
<span class="t b" id="r2a" style="left:1232px;top:370px">Phase terminale : roman</span>
<span class="t " id="r2i" style="left:1429px;top:370px">[9782226068897]</span>
<span class="t au" id="r2b" style="left:1211px;top:389px">Robin Cook (1940 - ...)</span>
<span class="t " id="r2c" style="left:1211px;top:408px"><span class="lnk">A. Michel</span>, édité en 1994</span>
<span class="t " id="r2d" style="left:1211px;top:427px">1 ex. sur le site</span>
<svg class="abs" style="left:1211px;top:466px" width="17" height="15" viewBox="0 0 17 15" fill="none" stroke="#333" stroke-width="1" stroke-linejoin="round"><path d="M8.5 2.6 C6.8 1.2 4.2 0.8 2 0.8 C1.2 0.8 0.6 1.2 0.6 2.2 V10.8 C0.6 11.6 1.2 12.2 2 12.2 C4.2 12.2 6.8 12.6 8.5 14 Z"/><path d="M8.5 2.6 C10 1.2 12.4 0.6 14.8 0.6 C15.8 0.6 16.4 1.2 16.4 2.2 V10.8 C16.4 11.6 15.8 12.2 15 12.2 C12.6 12.2 10 12.6 8.5 14"/><path d="M3 4.4 H6 M3 6.8 H6"/></svg>
<span class="t b" id="r3a" style="left:1232px;top:463px">Quelque chose de pourri au royaume d'Angleterre</span>
<span class="t " id="r3i" style="left:1211px;top:481px">[9782743610715]</span>
<span class="t au" id="r3b" style="left:1211px;top:500px">Robin Cook (1931 - 1994)</span>
<span class="t " id="r3c" style="left:1211px;top:519px"><span class="lnk">Payot et Rivages</span>, édité en 2003</span>
<span class="t " id="r3d" style="left:1211px;top:538px">1 ex. sur le site</span>
<svg class="abs" style="left:1211px;top:576px" width="17" height="15" viewBox="0 0 17 15" fill="none" stroke="#333" stroke-width="1" stroke-linejoin="round"><path d="M8.5 2.6 C6.8 1.2 4.2 0.8 2 0.8 C1.2 0.8 0.6 1.2 0.6 2.2 V10.8 C0.6 11.6 1.2 12.2 2 12.2 C4.2 12.2 6.8 12.6 8.5 14 Z"/><path d="M8.5 2.6 C10 1.2 12.4 0.6 14.8 0.6 C15.8 0.6 16.4 1.2 16.4 2.2 V10.8 C16.4 11.6 15.8 12.2 15 12.2 C12.6 12.2 10 12.6 8.5 14"/><path d="M3 4.4 H6 M3 6.8 H6"/></svg>
<span class="t b" id="r4a" style="color:#000;left:1232px;top:573px">La rue obscène</span>
<span class="t " id="r4i" style="color:#000;left:1362px;top:573px">[9782869308428]</span>
<span class="t au" id="r4b" style="left:1211px;top:592px">Robin Cook (1931 - 1994)</span>
<span class="t " id="r4c" style="color:#000;left:1211px;top:611px"><span class="lnk">Rivages</span>, édité en 1994</span>
<span class="t " id="r4d" style="color:#000;left:1211px;top:630px">1 ex. sur le site</span>
<span class="abs" style="left:1631px;top:291px;width:5px;height:5px;border-radius:50%;background:#222"></span>
<span class="t b" id="e0a" style="left:1647px;top:284px">Drôme Nord <span class="g">[ Disponible ]</span></span>
<span class="abs" style="left:1648px;top:306px;width:6px;height:6px;border-radius:50%;border:1px solid #222"></span>
<span class="t b" id="e0b" style="left:1665px;top:299px">Médiathèque Benjamin Rabier <span class="g">[</span></span>
<span class="t b g" id="e0c" style="left:1665px;top:314px">Disponible ]</span>
<span class="abs" style="left:1631px;top:391px;width:5px;height:5px;border-radius:50%;background:#222"></span>
<span class="t b" id="e1a" style="left:1647px;top:384px">Drôme Nord <span class="g">[ Disponible ]</span></span>
<span class="abs" style="left:1648px;top:406px;width:6px;height:6px;border-radius:50%;border:1px solid #222"></span>
<span class="t b" id="e1b" style="left:1665px;top:399px">Médiathèque Benjamin Rabier <span class="g">[</span></span>
<span class="t b g" id="e1c" style="left:1665px;top:414px">Disponible ]</span>
<span class="abs" style="left:1631px;top:492px;width:5px;height:5px;border-radius:50%;background:#222"></span>
<span class="t b" id="e2a" style="left:1647px;top:485px">Drôme Nord <span class="g">[ Disponible ]</span></span>
<span class="abs" style="left:1648px;top:508px;width:6px;height:6px;border-radius:50%;border:1px solid #222"></span>
<span class="t b" id="e2b" style="left:1665px;top:501px">Médiathèque Benjamin Rabier <span class="g">[</span></span>
<span class="t b g" id="e2c" style="left:1665px;top:516px">Disponible ]</span>
<span class="abs" style="left:1631px;top:594px;width:5px;height:5px;border-radius:50%;background:#222"></span>
<span class="t b" id="e3a" style="left:1647px;top:587px">Drôme Nord <span class="g">[ Disponible ]</span></span>
<span class="abs" style="left:1648px;top:609px;width:6px;height:6px;border-radius:50%;border:1px solid #222"></span>
<span class="t b" id="e3b" style="left:1665px;top:602px">Médiathèque Benjamin Rabier <span class="g">[</span></span>
<span class="t b g" id="e3c" style="left:1665px;top:617px">Disponible ]</span>
<div class="abs" style="left:1194px;top:262px;width:414px;height:396px;border:2px solid #ff0000"></div>
<div class="abs" style="left:639px;top:846px;width:850px;height:9px;border-radius:5px;background:#aaaaaa"></div>
<div class="abs" style="left:639px;top:860px;width:51px;height:42px;border:1px solid #dedede;border-radius:4px;background:#fff"></div><svg class="abs" style="left:654px;top:874px" width="21" height="14" viewBox="0 0 21 14" fill="none" stroke="#c4c4c4" stroke-width="1.2" stroke-linejoin="round"><path d="M9.6 1.4 V12.6 L1 7 Z"/><path d="M19.6 1.4 V12.6 L11 7 Z"/></svg>
<div class="abs" style="left:693px;top:861px;width:49px;height:40px;border:1px solid #dedede;border-radius:4px;background:#fff"></div><svg class="abs" style="left:709px;top:874px" width="16" height="14" viewBox="0 0 16 14" fill="none" stroke="#c4c4c4" stroke-width="1.2" stroke-linejoin="round"><path d="M1 1 V13"/><path d="M14.6 1.4 V12.6 L5 7 Z"/></svg>
<span class="abs" style="left:744px;top:875px;width:1.5px;height:12px;background:#333"></span>
<span class="t" id="p1" style="left:753px;top:872px;font-size:17px;color:#3a3a3a">Page</span>
<div class="abs" style="left:799px;top:870px;width:27px;height:22px;border:1px solid #c4c4c4;border-radius:4px;background:#fff"></div>
<span class="t" style="left:809px;top:871px;font-size:15px">1</span>
<span class="t" id="p2" style="left:832px;top:872px;font-size:17px;color:#3a3a3a">sur 1</span>
<span class="abs" style="left:873px;top:875px;width:1.5px;height:12px;background:#333"></span>
<div class="abs" style="left:877px;top:861px;width:49px;height:40px;border:1px solid #dedede;border-radius:4px;background:#fff"></div><svg class="abs" style="left:893px;top:874px" width="16" height="14" viewBox="0 0 16 14" fill="none" stroke="#c4c4c4" stroke-width="1.2" stroke-linejoin="round"><path d="M15 1 V13"/><path d="M1.4 1.4 V12.6 L11 7 Z"/></svg>
<div class="abs" style="left:929px;top:861px;width:49px;height:40px;border:1px solid #dedede;border-radius:4px;background:#fff"></div><svg class="abs" style="left:943px;top:874px" width="21" height="14" viewBox="0 0 21 14" fill="none" stroke="#c4c4c4" stroke-width="1.2" stroke-linejoin="round"><path d="M1.4 1.4 V12.6 L10 7 Z"/><path d="M11.4 1.4 V12.6 L20 7 Z"/></svg>
<span class="abs" style="left:980px;top:875px;width:1.5px;height:12px;background:#333"></span>
<div class="abs" style="left:985px;top:861px;width:48px;height:40px;border:1px solid #b9b9b9;border-radius:4px;background:#fff"></div><svg class="abs" style="left:999px;top:871px" width="20" height="20" viewBox="0 0 20 20" fill="none" stroke="#333" stroke-width="1.4" stroke-linecap="round" stroke-linejoin="round"><path d="M2 8.4 C2.8 4.6 6 2 10 2 C13 2 15.6 3.6 17 6"/><path d="M17.6 1.8 V6.2 H13.2"/><path d="M18 11.6 C17.2 15.4 14 18 10 18 C7 18 4.4 16.4 3 14"/><path d="M2.4 18.2 V13.8 H6.8"/></svg>
<span class="t" id="p3" style="left:1700px;top:872px;font-size:17px;color:#3c3c3c">Page courante 1 - 4 sur 4</span>
<!-- left panel content -->
<svg class="abs" style="left:30px;top:194px" width="17" height="20" viewBox="0 0 17 20" fill="none" stroke="#333" stroke-width="1.3"><rect x="0.9" y="0.9" width="14" height="17" rx="7"/><rect x="6.5" y="4" width="2.8" height="3.8" rx="1.4"/><path d="M7.9 0.9 V4"/></svg>
<span class="t h" id="h1" style="left:57px;top:194px;color:#5a4bc6">Outils de recherche</span>
<svg class="abs" style="left:498px;top:193px" width="21" height="21" viewBox="0 0 21 21" fill="none" stroke="#444" stroke-width="1.1" stroke-linecap="round" stroke-linejoin="round"><circle cx="10.5" cy="10.5" r="9.8"/><path d="M11.6 7.6 L8.6 10.5 L11.6 13.4"/></svg>
<svg class="abs" style="left:528px;top:193px" width="21" height="21" viewBox="0 0 21 21"><path d="M12.3 1.1 L19.6 7.6 L15.6 10.4 L14.6 12.8 L11.6 18.5 L2 9.3 L8.2 7.6 L10.2 6 Z" fill="#3a3a3a"/><path d="M7 13.8 L1 19.6" stroke="#3a3a3a" stroke-width="1.4" fill="none"/></svg>
<div class="hr" style="left:27px;top:230px;width:539px"></div>
<svg class="abs" style="left:28px;top:250px" width="21" height="21" viewBox="0 0 21 21" fill="none" stroke="#8b913a" stroke-width="1.2" stroke-linecap="round"><circle cx="9.4" cy="10" r="8.6"/><path d="M17 17.6 L19.4 19.8"/></svg>
<span class="t h" id="h2" style="left:57px;top:250px;color:#8ba83a">Recherche simple</span>
<svg class="abs" style="left:528px;top:250px" width="21" height="21" viewBox="0 0 21 21" fill="none" stroke="#444" stroke-width="1.1" stroke-linecap="round" stroke-linejoin="round"><circle cx="10.5" cy="10.5" r="9.8"/><path d="M7.4 11.8 L10.5 8.8 L13.6 11.8"/></svg>
<div class="hr" style="left:27px;top:287px;width:539px"></div>
<div class="abs" style="left:27px;top:299px;width:539px;height:219px;background:#f8faf4"></div>
<div class="inp" style="left:32px;top:303px;width:479px;height:40px"></div>
<span class="t" id="f1" style="left:48px;top:313px">cook</span>
<svg class="abs" style="left:481px;top:317px" width="12" height="12" viewBox="0 0 12 12" fill="none" stroke="#222" stroke-width="1.4" stroke-linecap="round"><path d="M1.500 1.500 L10.500 10.500 M10.500 1.500 L1.500 10.500"/></svg>
<div class="inp" style="left:32px;top:347px;width:230px;height:40px"></div>
<span class="t" id="f2" style="left:48px;top:357px">Tous critères</span>
<svg class="abs" style="left:211px;top:360px" width="14" height="14" viewBox="0 0 14 14" fill="none" stroke="#222" stroke-width="1.4" stroke-linejoin="round"><path d="M7 12.6 C4 10.6 1.4 8.4 1.4 5 C1.4 2.6 3 1.6 5 1.6 H9 C11 1.6 12.6 2.6 12.6 5 C12.6 8.4 10 10.6 7 12.6 Z"/></svg><svg class="abs" style="left:232px;top:361px" width="12" height="12" viewBox="0 0 12 12" fill="none" stroke="#222" stroke-width="1.4" stroke-linecap="round"><path d="M1.500 1.500 L10.500 10.500 M10.500 1.500 L1.500 10.500"/></svg>
<div class="inp" style="left:268px;top:347px;width:242px;height:40px;border-radius:4px 0 0 4px;border-right-color:#cfcfcf"></div>
<span class="t" id="f3" style="left:285px;top:357px">Document</span>
<svg class="abs" style="left:459px;top:360px" width="14" height="14" viewBox="0 0 14 14" fill="none" stroke="#222" stroke-width="1.4" stroke-linejoin="round"><path d="M7 12.6 C4 10.6 1.4 8.4 1.4 5 C1.4 2.6 3 1.6 5 1.6 H9 C11 1.6 12.6 2.6 12.6 5 C12.6 8.4 10 10.6 7 12.6 Z"/></svg><svg class="abs" style="left:480px;top:361px" width="12" height="12" viewBox="0 0 12 12" fill="none" stroke="#222" stroke-width="1.4" stroke-linecap="round"><path d="M1.500 1.500 L10.500 10.500 M10.500 1.500 L1.500 10.500"/></svg>
<span class="t" id="f4" style="left:31px;top:403px">Site dépositaire</span>
<div class="inp" style="left:158px;top:392px;width:353px;height:39px"></div>
<span class="t" id="f5" style="left:174px;top:401px">Médiathèque Benjamin Rabier</span>
<svg class="abs" style="left:460px;top:404px" width="14" height="14" viewBox="0 0 14 14" fill="none" stroke="#222" stroke-width="1.4" stroke-linejoin="round"><path d="M7 12.6 C4 10.6 1.4 8.4 1.4 5 C1.4 2.6 3 1.6 5 1.6 H9 C11 1.6 12.6 2.6 12.6 5 C12.6 8.4 10 10.6 7 12.6 Z"/></svg><svg class="abs" style="left:481px;top:405px" width="12" height="12" viewBox="0 0 12 12" fill="none" stroke="#222" stroke-width="1.4" stroke-linecap="round"><path d="M1.500 1.500 L10.500 10.500 M10.500 1.500 L1.500 10.500"/></svg>
<span class="abs" style="left:32px;top:442px;width:12px;height:12px;border:1px solid #8a8a8a;background:#f3f3f3;box-shadow:inset 1px 1px 1px #ddd"></span>
<span class="t" id="f6" style="left:47px;top:438px">Parcourir également les champs notes et résumés</span>
<div class="inp" style="left:409px;top:472px;width:96px;height:39px"></div>
<svg class="abs" style="left:426px;top:483px" width="18" height="19" viewBox="0 0 18 19" fill="none" stroke="#222" stroke-width="1.3" stroke-linejoin="round" stroke-linecap="round"><path d="M10.4 1 H3 C1.6 1 1 2.2 1.8 3.4 L5.6 8.6 V13.8 C5.6 15 6.4 15.6 7.4 15.6 C8.4 15.6 9.2 15.8 9.2 15.6"/><path d="M9.2 15 V8.8 L10 7.6"/><path d="M10.4 1 H14.4 C15.8 1 16.4 2.2 15.6 3.4 L14.8 4.6"/><circle cx="12.8" cy="9.2" r="2.6"/><path d="M14.8 11.2 L16.6 13"/></svg>
<span class="t" id="f7" style="left:445px;top:482px">Affiner</span>
<div class="abs" style="left:512px;top:472px;width:47px;height:38px;background:#5a48c7;border-radius:4px;border:1px solid #4a3ab0"></div>
<svg class="abs" style="left:526px;top:480.500px" width="21" height="21" viewBox="0 0 21 21" fill="none" stroke="#fff" stroke-width="1.5" stroke-linecap="round"><circle cx="9.6" cy="10" r="8.4"/><path d="M16.6 17.4 L19 19.6"/></svg>
<svg class="abs" style="left:28px;top:527px" width="21" height="20" viewBox="0 0 21 20" fill="none" stroke="#3c8fd0" stroke-width="1.4" stroke-linecap="round"><path d="M9.6 1.2 C4.8 1.2 1 4.8 1 9.6 C1 14.4 4.8 18 9.6 18 C11.6 18 13.4 17.4 14.8 16.4"/><path d="M18.2 9.6 C18.2 11 17.8 12.2 17.2 13.2"/><circle cx="17.6" cy="17.2" r="1.4" stroke-width="1.2"/><path d="M11.4 3.6 H17 M13.4 6.8 H17"/></svg>
<span class="t h" id="h3" style="left:57px;top:527px;color:#3c8fd0">Recherche avancée</span>
<svg class="abs" style="left:498px;top:526px" width="21" height="21" viewBox="0 0 21 21" fill="none" stroke="#333" stroke-width="1.1" stroke-linejoin="round"><rect x="0.8" y="0.8" width="19.4" height="19.4" rx="5"/><path d="M5.8 15.4 V6.4 C5.8 5.2 6.4 4.6 7.6 4.6 H13.4 C14.6 4.6 15.2 5.2 15.2 6.4 V15.4 L12.8 13.8 L10.5 15.4 L8.2 13.8 Z"/></svg>
<svg class="abs" style="left:528px;top:526px" width="21" height="21" viewBox="0 0 21 21" fill="none" stroke="#444" stroke-width="1.1" stroke-linecap="round" stroke-linejoin="round"><circle cx="10.5" cy="10.5" r="9.8"/><path d="M7.4 9.2 L10.5 12.2 L13.6 9.2"/></svg>
<div class="hr" style="left:27px;top:563px;width:539px"></div>
<svg class="abs" style="left:28px;top:582px" width="20" height="21" viewBox="0 0 20 21" fill="none" stroke="#c65db4" stroke-width="1.3" stroke-linecap="round" stroke-linejoin="round"><path d="M12 19.6 H6 C3 19.6 1.2 17.8 1.2 14.8 V8.4 C1.2 5.4 3 3.6 6 3.6 H13.6 C16.6 3.6 18.4 5.4 18.4 8.4 V13.2 Z"/><path d="M12 19.6 V16.4 C12 14.2 13.2 13.2 15.2 13.2 H18.4"/><path d="M6.2 1.2 V3.6 M13.4 1.2 V3.6"/><path d="M5.4 9.4 H13.4 M5.4 13.4 H9.8"/></svg>
<span class="t h" id="h4" style="left:57px;top:583px;color:#b2449c">Dernières notices modifiées</span>
<svg class="abs" style="left:528px;top:583px" width="21" height="21" viewBox="0 0 21 21" fill="none" stroke="#444" stroke-width="1.1" stroke-linecap="round" stroke-linejoin="round"><circle cx="10.5" cy="10.5" r="9.8"/><path d="M7.4 9.2 L10.5 12.2 L13.6 9.2"/></svg>
<div class="hr" style="left:27px;top:620px;width:539px"></div>
<svg class="abs" style="left:28px;top:640px" width="21" height="20" viewBox="0 0 21 20" fill="none" stroke="#ea7345" stroke-width="1.3" stroke-linecap="round" stroke-linejoin="round"><path d="M1 8 H19.6"/><path d="M2.4 8 L4 16.4 C4.4 18.2 5.4 19 7.2 19 H13.4 C15.2 19 16.2 18.2 16.6 16.4 L18.2 8"/><path d="M4.600 7.600 L8.600 1.400 M16 7.600 L12 1.400"/><path d="M8.2 12 V15.6 M12.4 12 V15.6" stroke-width="1.6"/></svg>
<span class="t h" id="h5" style="left:57px;top:640px;color:#ea7345">Panier : Test visibilité publique</span>
<svg class="abs" style="left:498px;top:639px" width="21" height="21" viewBox="0 0 21 21" fill="none" stroke="#444" stroke-width="1.1" stroke-linecap="round" stroke-linejoin="round"><path d="M1.2 1 C3 1 4.2 1.8 4.400 3.400 L5.400 12 C5.600 13.600 6.400 14.300 8 14.300 H16 C17.600 14.300 18.600 13.600 18.800 12 L19.600 5.600 C19.800 3.800 19 2.800 17.200 2.800 H4.400"/><path d="M4.800 6.400 H19.400"/><circle cx="6.800" cy="19" r="1.100"/><circle cx="14.400" cy="19" r="1.100"/></svg>
<svg class="abs" style="left:528px;top:639px" width="21" height="21" viewBox="0 0 21 21" fill="none" stroke="#444" stroke-width="1.1" stroke-linecap="round" stroke-linejoin="round"><circle cx="10.5" cy="10.5" r="9.8"/><path d="M7.4 9.2 L10.5 12.2 L13.6 9.2"/></svg>

</body>
</html>
